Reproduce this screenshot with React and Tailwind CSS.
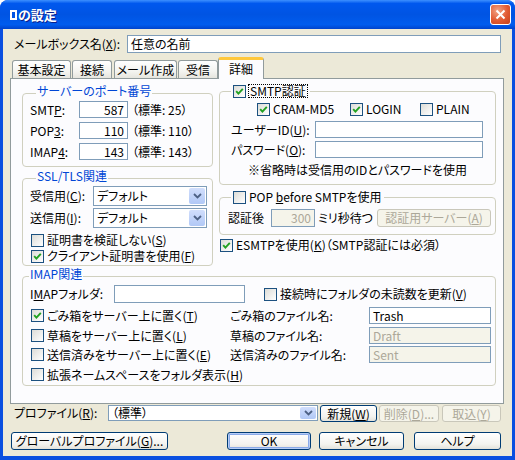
import React from 'react';

const PANEL = 'bg-[#FCFCFE]';

function Check({ checked, children, className = '' }) {
  return (
    <div className={`flex items-center whitespace-nowrap ${className}`}>
      <span className="w-[13px] h-[13px] shrink-0 border border-[#1C5180] bg-[linear-gradient(135deg,#DCDCD7,#FFFFFF)] flex items-center justify-center">
        {checked && (
          <svg width="9" height="9" viewBox="0 0 9 9">
            <path d="M1.2 4.2 L3.4 6.6 L7.8 1.8" stroke="#21A121" strokeWidth="1.9" fill="none" />
          </svg>
        )}
      </span>
      {children != null && <span className="ml-[3px]">{children}</span>}
    </div>
  );
}

function Field({ value, disabled, right, className = '' }) {
  return (
    <div
      className={`border border-[#7F9DB9] flex items-center px-[3px] ${right ? 'justify-end' : ''} ${
        disabled ? 'bg-[#F5F4EA] text-[#ACA899]' : 'bg-white'
      } ${className}`}
    >
      {value}
    </div>
  );
}

function Combo({ value, className = '' }) {
  return (
    <div className={`border border-[#7F9DB9] bg-white flex items-stretch ${className}`}>
      <span className="flex-1 flex items-center pl-[3px]">{value}</span>
      <span className="w-[16px] m-[1px] rounded-[2px] bg-[linear-gradient(#D1DEFC,#B1C8F6)] flex items-center justify-center">
        <svg width="9" height="6" viewBox="0 0 9 6">
          <path d="M1 1 L4.5 4.5 L8 1" stroke="#4D6185" strokeWidth="1.8" fill="none" />
        </svg>
      </span>
    </div>
  );
}

function Btn({ children, disabled, className = '' }) {
  return (
    <div
      className={`border rounded-[3px] flex items-center justify-center whitespace-nowrap ${
        disabled
          ? 'border-[#C9C7BA] bg-[#F5F4EA] text-[#ACA899]'
          : 'border-[#003C74] bg-[linear-gradient(#FFFFFF,#F3F3EF_70%,#E3E2DA)]'
      } ${className}`}
    >
      {children}
    </div>
  );
}

function Group({ title, className = '', children }) {
  return (
    <div className={`border border-[#D0D0BF] rounded-[4px] ${className}`}>
      <div className={`-mt-[10px] ml-[6px] px-[1px] w-fit h-[14px] text-[#0046D5] ${PANEL}`}>{title}</div>
      {children}
    </div>
  );
}

function Tab({ label, w }) {
  return (
    <div
      className={`${w} h-[18px] border border-b-0 border-[#919B9C] rounded-t-[3px] bg-[linear-gradient(#FFFFFF,#F4F4F0_60%,#E6E5DE)] flex items-center justify-center`}
    >
      {label}
    </div>
  );
}

export default function App() {
  return (
    <div className="w-[515px] h-[460px] bg-white font-['Noto_Sans_CJK_JP',sans-serif] text-[12px] leading-[14px] text-black [font-feature-settings:'palt']">
      <div className="w-full h-full flex flex-col rounded-t-[8px] overflow-hidden bg-[#0A4FE0]">
        {/* title bar */}
        <div className="h-[29px] shrink-0 flex items-center pl-[10px] pr-[4px] bg-[linear-gradient(to_bottom,#3D90FF_0%,#0058EE_12%,#0054E3_50%,#005CEE_85%,#0043CC_100%)]">
          <span className="flex items-center text-white font-bold text-[13px] [text-shadow:1px_1px_#0A1F8C]">
            <span className="inline-block w-[7px] h-[10px] border-2 border-white mr-[1px]"></span>
            の設定
          </span>
          <div className="ml-auto w-[21px] h-[21px] rounded-[3px] border border-white bg-[radial-gradient(circle_at_35%_30%,#F2A486,#E15A32_55%,#C5401A)] flex items-center justify-center">
            <svg width="11" height="11" viewBox="0 0 11 11">
              <path d="M1.5 1.5 L9.5 9.5 M9.5 1.5 L1.5 9.5" stroke="white" strokeWidth="2" />
            </svg>
          </div>
        </div>

        {/* client area */}
        <div className="flex-1 mx-[3px] mb-[4px] bg-[#ECE9D8] flex flex-col pl-[7px]">
          {/* mailbox name */}
          <div className="mt-[6px] flex items-center h-[18px]">
            <span className="ml-[4px] w-[113px]">
              メールボックス名(<u>X</u>):
            </span>
            <Field value="任意の名前" className="w-[374px] h-[18px]" />
          </div>

          {/* tabs */}
          <div className="mt-[4px] h-[21px] flex items-end pl-[2px]">
            <Tab label="基本設定" w="w-[59px]" />
            <div className="ml-[1px]">
              <Tab label="接続" w="w-[40px]" />
            </div>
            <div className="ml-[2px]">
              <Tab label="メール作成" w="w-[63px]" />
            </div>
            <div className="ml-[1px]">
              <Tab label="受信" w="w-[40px]" />
            </div>
            <div
              className={`relative z-10 -mb-[1px] w-[46px] h-[22px] border border-b-0 border-[#919B9C] border-t-[3px] border-t-[#FFC83C] rounded-t-[3px] ${PANEL} flex items-center justify-center pb-[1px]`}
            >
              詳細
            </div>
          </div>

          {/* panel */}
          <div className={`w-[494px] h-[326px] border border-[#919B9C] ${PANEL} pl-[11px]`}>
            <div className="flex items-start">
              {/* left column */}
              <div className="w-[191px]">
                <Group title="サーバーのポート番号" className="mt-[14px] pl-[7px] pb-[6px]">
                  {[
                    ['SMT', 'P', '', '587', '25'],
                    ['POP', '3', '', '110', '110'],
                    ['IMAP', '4', '', '143', '143'],
                  ].map(([a, u, b, v, d], i) => (
                    <div key={a} className={`flex items-center h-[17px] ${i === 0 ? 'mt-[3px]' : 'mt-[4px]'}`}>
                      <span className="w-[49px]">
                        {a}
                        <u>{u}</u>
                        {b}:
                      </span>
                      <Field value={v} right className="w-[49px] h-[17px]" />
                      <span className="ml-[4px]">（標準: {d}）</span>
                    </div>
                  ))}
                </Group>

                <Group title="SSL/TLS関連" className="mt-[11px] pl-[7px] pb-[1px]">
                  <div className="mt-[3px] flex items-center h-[20px]">
                    <span className="w-[63px]">
                      受信用(<u>C</u>):
                    </span>
                    <Combo value="デフォルト" className="w-[114px] h-[20px]" />
                  </div>
                  <div className="mt-[2px] flex items-center h-[20px]">
                    <span className="w-[63px]">
                      送信用(<u>I</u>):
                    </span>
                    <Combo value="デフォルト" className="w-[114px] h-[20px]" />
                  </div>
                  <Check className="mt-[4px] ml-[1px] h-[16px]">
                    証明書を検証しない(<u>S</u>)
                  </Check>
                  <Check checked className="ml-[1px] h-[16px]">
                    クライアント証明書を使用(<u>F</u>)
                  </Check>
                </Group>
              </div>

              {/* right column */}
              <div className="ml-[6px] w-[277px]">
                <div className="mt-[12px] border border-[#D0D0BF] rounded-[4px] pb-[7px]">
                  <div className={`-mt-[8px] ml-[11px] px-[2px] w-fit h-[14px] flex items-center ${PANEL}`}>
                    <Check checked />
                    <span className="ml-[2px] px-[1px] border border-dotted border-black leading-[12px]">SMTP認証</span>
                  </div>
                  <div className="mt-[3px] h-[16px] flex items-center pl-[37px]">
                    <Check checked className="w-[93px]">
                      CRAM-MD5
                    </Check>
                    <Check checked className="w-[70px]">
                      LOGIN
                    </Check>
                    <Check>PLAIN</Check>
                  </div>
                  <div className="mt-[4px] flex items-center h-[17px] pl-[11px]">
                    <span className="w-[84px]">
                      ユーザーID(<u>U</u>):
                    </span>
                    <Field value="" className="w-[168px] h-[17px]" />
                  </div>
                  <div className="mt-[3px] flex items-center h-[17px] pl-[11px]">
                    <span className="w-[84px]">
                      パスワード(<u>O</u>):
                    </span>
                    <Field value="" className="w-[168px] h-[17px]" />
                  </div>
                  <div className="mt-[5px] pl-[28px]">※省略時は受信用のIDとパスワードを使用</div>
                </div>

                <div className="mt-[12px] border border-[#D0D0BF] rounded-[4px] pb-[7px]">
                  <div className={`-mt-[8px] ml-[11px] px-[2px] w-fit h-[14px] flex items-center ${PANEL}`}>
                    <Check>
                      POP <u>b</u>efore SMTPを使用
                    </Check>
                  </div>
                  <div className="mt-[5px] flex items-center h-[18px] pl-[8px]">
                    <span className="w-[43px]">認証後</span>
                    <Field value="300" right disabled className="w-[44px] h-[18px]" />
                    <span className="ml-[3px] w-[59px]">ミリ秒待つ</span>
                    <Btn disabled className="w-[114px] h-[18px]">
                      認証用サーバー(<u>A</u>)
                    </Btn>
                  </div>
                </div>

                <Check checked className="mt-[2px] ml-[1px] h-[16px]">
                  ESMTPを使用(<u>K</u>)（SMTP認証には必須）
                </Check>
              </div>
            </div>

            {/* IMAP */}
            <Group title="IMAP関連" className="mt-[10px] w-[474px] pb-[2px]">
              <div className="mt-[4px] flex items-center h-[18px] pl-[7px]">
                <span className="w-[84px]">
                  I<u>M</u>APフォルダ:
                </span>
                <Field value="" className="w-[131px] h-[18px]" />
                <Check className="ml-[19px]">
                  接続時にフォルダの未読数を更新(<u>V</u>)
                </Check>
              </div>
              {[
                [true, '草', 'ごみ箱をサーバー上に置く', 'T', 'ごみ箱のファイル名:', 'Trash', false, 'mt-[4px]'],
                [false, '', '草稿をサーバー上に置く', 'L', '草稿のファイル名:', 'Draft', true, 'mt-[3px]'],
                [false, '', '送信済みをサーバー上に置く', 'E', '送信済みのファイル名:', 'Sent', true, 'mt-[2px]'],
              ].map(([c, , t, k, l, v, d, m]) => (
                <div key={k} className={`flex items-center h-[17px] pl-[8px] ${m}`}>
                  <Check checked={c} className="w-[199px]">
                    {t}(<u>{k}</u>)
                  </Check>
                  <span className="w-[139px]">{l}</span>
                  <Field value={v} disabled={d} className="w-[122px] h-[17px]" />
                </div>
              ))}
              <Check className="mt-[3px] ml-[8px] h-[17px]">
                拡張ネームスペースをフォルダ表示(<u>H</u>)
              </Check>
            </Group>
          </div>

          {/* profile */}
          <div className="mt-[1px] flex items-start">
            <span className="ml-[4px] w-[94px] h-[16px] flex items-center">
              プロファイル(<u>R</u>):
            </span>
            <Combo value="（標準）" className="w-[210px] h-[16px]" />
            <Btn className="ml-[2px] w-[57px] h-[17px]">
              新規(<u>W</u>)
            </Btn>
            <Btn disabled className="ml-[2px] w-[60px] h-[17px]">
              削除(<u>D</u>)...
            </Btn>
            <Btn disabled className="ml-[3px] w-[59px] h-[17px]">
              取込(<u>Y</u>)
            </Btn>
          </div>

          {/* buttons */}
          <div className="mt-[10px] flex items-center">
            <Btn className="ml-[1px] w-[157px] h-[18px]">
              グローバルプロファイル(<u>G</u>)...
            </Btn>
            <Btn className="ml-[59px] w-[84px] h-[18px] shadow-[inset_0_0_0_1px_#B6CDF6,inset_0_0_0_2px_#8AAAE8]">
              OK
            </Btn>
            <Btn className="ml-[8px] w-[85px] h-[18px]">キャンセル</Btn>
            <Btn className="ml-[10px] w-[87px] h-[18px]">ヘルプ</Btn>
          </div>
        </div>
      </div>
    </div>
  );
}
